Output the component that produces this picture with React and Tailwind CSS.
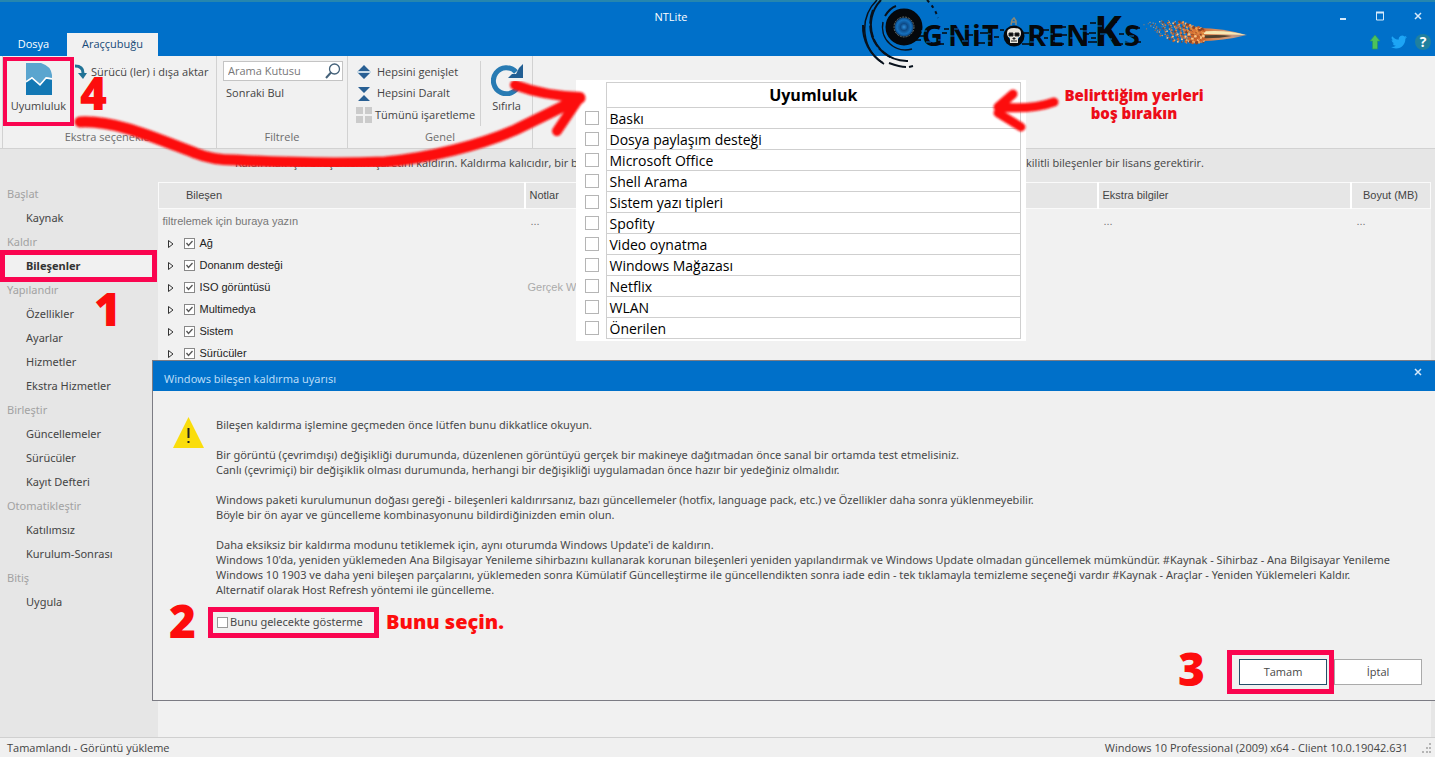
import React from "react";

const menu = [
  { title: "Başlat", items: ["Kaynak"] },
  { title: "Kaldır", items: ["Bileşenler"] },
  { title: "Yapılandır", items: ["Özellikler", "Ayarlar", "Hizmetler", "Ekstra Hizmetler"] },
  { title: "Birleştir", items: ["Güncellemeler", "Sürücüler", "Kayıt Defteri"] },
  { title: "Otomatikleştir", items: ["Katılımsız", "Kurulum-Sonrası"] },
  { title: "Bitiş", items: ["Uygula"] },
];

const components = [
  { name: "Ağ" },
  { name: "Donanım desteği" },
  { name: "ISO görüntüsü", note: "Gerçek W" },
  { name: "Multimedya" },
  { name: "Sistem" },
  { name: "Sürücüler" },
];

const compatibility = [
  "Baskı",
  "Dosya paylaşım desteği",
  "Microsoft Office",
  "Shell Arama",
  "Sistem yazı tipleri",
  "Spofity",
  "Video oynatma",
  "Windows Mağazası",
  "Netflix",
  "WLAN",
  "Önerilen",
];

const warning = [
  ["Bileşen kaldırma işlemine geçmeden önce lütfen bunu dikkatlice okuyun."],
  [
    "Bir görüntü (çevrimdışı) değişikliği durumunda, düzenlenen görüntüyü gerçek bir makineye dağıtmadan önce sanal bir ortamda test etmelisiniz.",
    "Canlı (çevrimiçi) bir değişiklik olması durumunda, herhangi bir değişikliği uygulamadan önce hazır bir yedeğiniz olmalıdır.",
  ],
  [
    "Windows paketi kurulumunun doğası gereği - bileşenleri kaldırırsanız, bazı güncellemeler (hotfix, language pack, etc.) ve Özellikler daha sonra yüklenmeyebilir.",
    "Böyle bir ön ayar ve güncelleme kombinasyonunu bildirdiğinizden emin olun.",
  ],
  [
    "Daha eksiksiz bir kaldırma modunu tetiklemek için, aynı oturumda Windows Update'i de kaldırın.",
    "Windows 10'da, yeniden yüklemeden Ana Bilgisayar Yenileme sihirbazını kullanarak korunan bileşenleri yeniden yapılandırmak ve Windows Update olmadan güncellemek mümkündür. #Kaynak - Sihirbaz - Ana Bilgisayar Yenileme",
    "Windows 10 1903 ve daha yeni bileşen parçalarını, yüklemeden sonra Kümülatif Güncelleştirme ile güncellendikten sonra iade edin - tek tıklamayla temizleme seçeneği vardır #Kaynak - Araçlar - Yeniden Yüklemeleri Kaldır.",
    "Alternatif olarak Host Refresh yöntemi ile güncelleme.",
  ],
];

const logoLetters = [
  { ch: "G", x: 72, y: 46, size: 29 },
  { ch: "N", x: 98, y: 46, size: 29 },
  { ch: "i", x: 122, y: 46, size: 29 },
  { ch: "T", x: 132, y: 46, size: 29 },
  { ch: "R", x: 177, y: 46, size: 29 },
  { ch: "E", x: 198, y: 46, size: 29 },
  { ch: "N", x: 216, y: 46, size: 29 },
  { ch: "K", x: 244, y: 46, size: 42 },
  { ch: "S", x: 274, y: 46, size: 29 },
];

const sparkColors = ["#e58a3c", "#c8602a", "#f7c58a", "#8a4326", "#f2a050", "#d9763a"];

// debris trail behind the bullet, denser towards the tip
const sparks = Array.from({ length: 260 }, (_, i) => {
  const a = (i * 0.618034) % 1;
  const b = (i * 0.414214 + 0.3) % 1;
  const t = Math.sqrt(a);
  return {
    x: 294 + t * 60,
    y: 26 + t * 10 + (b - 0.5) * (6 + 15 * Math.sin(t * 2.7)),
    r: 0.5 + t * ((i % 4) * 0.45),
    color: sparkColors[i % 6],
  };
});

const Logo = () => (
  <svg
    className="absolute left-[850px] top-0 w-[410px] h-20 pointer-events-none"
    viewBox="0 0 410 80"
    fill="none"
  >
    <defs>
      <linearGradient id="bullet" x1="0" x2="1">
        <stop offset="0" stopColor="#c8541e" />
        <stop offset="0.4" stopColor="#d98a58" />
        <stop offset="0.7" stopColor="#cf9a7c" />
        <stop offset="1" stopColor="#8d8f9a" />
      </linearGradient>
      <radialGradient id="lens">
        <stop offset="0" stopColor="#2d8fdc" />
        <stop offset="0.25" stopColor="#0e4a86" />
        <stop offset="0.5" stopColor="#1671bd" />
        <stop offset="0.65" stopColor="#0e4a86" />
        <stop offset="1" stopColor="#12395c" />
      </radialGradient>
    </defs>
    <g stroke="#08111c">
      <path d="M27 0A41 41 0 0 0 34 64" strokeWidth="1.5" />
      <path d="M31 0A36 36 0 0 0 58 61" strokeWidth="2" strokeDasharray="40 2 12 3" />
      <path d="M23 10A37 37 0 0 0 42 58" strokeWidth="2" strokeDasharray="14 2 22 3" />
      <path d="M13 25A43 43 0 0 0 33 63" strokeWidth="2" />
      <path d="M39 63Q50 67 56 67M59 67L63 66" strokeWidth="2" />
      <path d="M33 22A23 23 0 0 0 62 49" strokeWidth="1.5" />
      <path d="M35 16Q40 8 46 6" strokeWidth="2" />
      <path d="M77 0Q85 8 88 18" strokeWidth="2" strokeDasharray="3 4" />
    </g>
    <circle cx="54" cy="27" r="14" fill="url(#lens)" stroke="#05080c" strokeWidth="9" />
    <circle cx="54" cy="27" r="10" stroke="#66716f" strokeWidth="1" strokeDasharray="2 1" />
    {logoLetters.map((letter, index) => (
      <text
        key={index}
        x={letter.x}
        y={letter.y}
        fontSize={letter.size}
        className="font-['Open_Sans',sans-serif] font-bold"
        fill="#05080c"
      >
        {letter.ch}
      </text>
    ))}
    <path
      d="M71 31h6M76 42h5M88 40h6M100 36h5M104 29h4M112 41h6M114 29h5M132 41h9M137 34h4M180 42h5M184 34h5M197 34h6M203 41h6M220 38h6M232 31h5M225 44h5M246 26h6M250 34h6M255 39h7M262 30h5M275 42h7M283 31h6M279 36h5"
      stroke="#0270ca"
      strokeWidth="1"
    />
    <path
      d="M68 36h6M66 40h5M88 44h6M92 33h5M94 29h5M116 35h7M113 43h5M128 43h7M130 33h8M144 37h5M150 30h4M172 44h8M174 33h5M192 30h7M194 38h4M208 44h6M210 35h7M212 27h4M230 29h6M234 34h5M238 42h9M239 33h7M241 38h5M240 23h6M262 22h5M265 44h8M269 34h5M286 28h4M287 42h4"
      stroke="#05080c"
      strokeWidth="1.5"
    />
    <circle cx="164" cy="36" r="8" stroke="#05080c" strokeWidth="5" />
    <path d="M157 33Q157 28 164 28T171 33Q171 37 168 38V43H160V38Q157 37 157 33Z" fill="#e9e6dc" />
    <path d="M159 33h4v3h-4zM165 33h4v3h-4zM163 38h2v1h-2zM161 41h6" fill="#080808" stroke="#222" />
    <path d="M161 25L162 20L164 18L166 21V25M161 22h5" stroke="#8d8975" strokeWidth="1.5" />
    <path d="M342 28Q370 27 397 35Q370 42 342 41Z" fill="url(#bullet)" />
    <path d="M346 32Q375 29 396 35Q370 34 346 34Z" fill="#f6e8b4" />
    <path d="M346 36Q368 34 382 36Q366 39 346 38Z" fill="#4d4130" />
    {sparks.map((spark, index) => (
      <circle key={index} cx={spark.x} cy={spark.y} r={spark.r} fill={spark.color} />
    ))}
  </svg>
);

const Header = () => (
  <header className="flex h-14 border-t-2 border-[#2586ae] bg-[#0070c9] text-white">
    <nav className="flex items-end w-[158px] text-[11px]">
      <button className="w-[67px] h-[23px]">Dosya</button>
      <button className="flex-1 h-[23px] bg-[#f1f1f1] text-[#174a78]">Araççubuğu</button>
    </nav>
    <h1 className="flex-1 pt-[7px] text-center text-[11px] leading-4">NTLite</h1>
    <div className="flex flex-col items-end w-[251px] pr-3 pt-2 gap-3">
      <div className="flex items-center gap-7 h-3">
        <button aria-label="Simge durumuna küçült">
          <svg className="w-2 h-3" viewBox="0 0 8 12">
            <path d="M1 9h6" stroke="#d5e9fa" strokeWidth="2" />
          </svg>
        </button>
        <button aria-label="Ekranı kapla">
          <svg className="w-[10px] h-3" viewBox="0 0 10 12" fill="none" stroke="#d5e9fa">
            <path d="M1.5 2v8h7V2" />
            <path d="M1 2.5h8" strokeWidth="2" />
          </svg>
        </button>
        <button aria-label="Kapat">
          <svg className="w-[10px] h-3" viewBox="0 0 10 12">
            <path d="M2 3l6 6M8 3l-6 6" stroke="#d5e9fa" strokeWidth="1.5" />
          </svg>
        </button>
      </div>
      <div className="flex items-center gap-2 -mr-2">
        <button aria-label="Güncelle">
          <svg className="w-4 h-4" viewBox="0 0 16 16">
            <path d="M8 1l5 6h-2.5v8h-5V7H3z" fill="#4cc25a" stroke="#2c9560" strokeWidth="0.7" />
          </svg>
        </button>
        <button aria-label="Twitter">
          <svg className="w-4 h-4" viewBox="0 0 24 24">
            <path
              d="M23.9 4.6c-.9.4-1.8.7-2.8.8 1-.6 1.8-1.6 2.2-2.7-1 .6-2 1-3.1 1.2a4.9 4.9 0 0 0-8.4 4.5C7.7 8.2 4.1 6.2 1.7 3.2a4.9 4.9 0 0 0 1.5 6.5c-.8 0-1.6-.2-2.2-.6 0 2.3 1.6 4.4 3.9 4.9-.7.2-1.5.2-2.2.1.6 2 2.4 3.4 4.6 3.4A9.9 9.9 0 0 1 0 19.5a13.9 13.9 0 0 0 7.5 2.2c9.1 0 14-7.5 14-14v-.6c1-.7 1.8-1.6 2.4-2.5z"
              fill="#1da5f5"
            />
          </svg>
        </button>
        <button
          aria-label="Yardım"
          className="w-4 h-4 rounded-full bg-[#20809e] text-white text-sm leading-4 font-bold"
        >
          ?
        </button>
      </div>
    </div>
  </header>
);

const RibbonGroup = ({ label, className, children }) => (
  <section className={`flex flex-col border-r border-[#d2d2d2] ${className}`}>
    <div className="flex h-[70px]">{children}</div>
    <h2 className="text-center leading-[22px] text-[#6c6c6c]">{label}</h2>
  </section>
);

const Ribbon = () => (
  <div className="flex h-[93px] border-b border-[#d2d2d2] bg-[#f1f1f1] pl-[2px] text-[11px] text-[#444]">
    <RibbonGroup label="Ekstra seçenekler" className="w-[215px] border-l">
      <button className="flex flex-col items-center w-[71px] h-[69px] mt-px border-4 border-[#fa0550] pt-[2px]">
        <svg className="w-[26px] h-8" viewBox="0 0 26 32">
          <path d="M0 0h15Q25 3 26 12v3l-6-1-6 7-8-7-6 4z" fill="#5aa5cf" />
          <path d="M0 19l6-4 8 7 6-7 6 1v16H0z" fill="#1378b4" />
          <path d="M0 19l6-4 8 7 6-7 6 1" stroke="#fff" strokeWidth="1.5" fill="none" />
        </svg>
        <span className="mt-[3px] whitespace-nowrap">Uyumluluk</span>
      </button>
      <button className="flex items-center gap-1 h-8 pl-px whitespace-nowrap">
        <svg className="w-3 h-4" viewBox="0 0 12 16">
          <path d="M0 2Q8 2 8 9" stroke="#207396" strokeWidth="3" fill="none" />
          <path d="M3 9h9l-4 6z" fill="#207396" />
        </svg>
        Sürücü (ler) i dışa aktar
      </button>
    </RibbonGroup>
    <RibbonGroup label="Filtrele" className="w-[131px]">
      <div className="flex flex-col w-full px-1 pl-[6px] pt-[5px]">
        <div className="flex items-center h-5 border border-[#c4c4c4] bg-white">
          <input
            aria-label="Arama Kutusu"
            placeholder="Arama Kutusu"
            className="w-full min-w-0 px-1 pt-px outline-none placeholder:text-[#777]"
          />
          <svg className="w-4 h-4 mr-px shrink-0" viewBox="0 0 16 16" fill="none" stroke="#446179">
            <circle cx="9.5" cy="6" r="5" strokeWidth="1.3" />
            <path d="M6 9.5L1 15" strokeWidth="2" />
          </svg>
        </div>
        <button className="h-6 pl-[3px] text-left">Sonraki Bul</button>
      </div>
    </RibbonGroup>
    <RibbonGroup label="Genel" className="w-[185px]">
      <div className="flex flex-col w-[133px] mt-[5px] border-r border-[#d2d2d2] pl-2 whitespace-nowrap">
        <button className="flex items-center gap-[5px] h-[22px]">
          <svg className="w-4 h-4" viewBox="0 0 16 16" fill="#285f93">
            <path d="M2 7l6-6 6 6zM2 9h12l-6 6z" />
            <path d="M1 8h14" stroke="#9ec2dc" />
          </svg>
          Hepsini genişlet
        </button>
        <button className="flex items-center gap-[5px] h-[22px]">
          <svg className="w-4 h-4" viewBox="0 0 16 16" fill="#285f93">
            <path d="M2 1h12L8 7zM8 9l6 6H2z" />
          </svg>
          Hepsini Daralt
        </button>
        <button className="flex items-center gap-[3px] h-[22px]">
          <svg className="w-4 h-4 shrink-0" viewBox="0 0 16 16" fill="#cbcbcb">
            <path d="M0 0h7v7H0zM9 0h7v7H9zM0 9h7v7H0zM9 9h7v7H9z" />
          </svg>
          Tümünü işaretleme
        </button>
      </div>
      <button className="flex flex-1 flex-col items-center justify-start pt-2 gap-[2px]">
        <svg className="w-8 h-8" viewBox="0 0 32 32" fill="none">
          <path d="M25 8A13 13 0 1 0 28 20" stroke="#287bb3" strokeWidth="5" />
          <path d="M32 0v14H17l4-4 4 0 3-6z" fill="#235f93" />
        </svg>
        <span>Sıfırla</span>
      </button>
    </RibbonGroup>
  </div>
);

const Sidebar = () => (
  <nav className="w-[158px] shrink-0 bg-[#e6e6e6] font-['Noto_Sans',sans-serif] text-[11px] leading-6">
    {menu.map((group) => (
      <div key={group.title}>
        <h3 className="pl-[7px] text-[#a2a2a2]">{group.title}</h3>
        <ul>
          {group.items.map((item) => (
            <li key={item}>
              {item === "Bileşenler" ? (
                <a
                  href="#bilesenler"
                  className="relative block -my-1 h-8 w-[157px] border-[5px] border-[#fa0550] bg-[#f1f1f1] pl-[21px] leading-[22px] font-bold text-[#333]"
                >
                  {item}
                </a>
              ) : (
                <a href="#menu" className="block h-6 pl-[26px] text-[#444]">
                  {item}
                </a>
              )}
            </li>
          ))}
        </ul>
      </div>
    ))}
  </nav>
);

const ComponentTable = () => (
  <main className="flex-1 pr-1 bg-[#e6e6e6] flex">
    <div className="flex-1 bg-[#f1f1f1]">
      <table className="w-full table-fixed border-collapse font-['Liberation_Sans',sans-serif] text-[11px] text-[#222]">
        <colgroup>
          <col className="w-[366px]" />
          <col />
          <col className="w-[253px]" />
          <col className="w-20" />
        </colgroup>
        <thead>
          <tr className="h-[26px] border border-[#fafafa] bg-[#e6e6e6] text-left text-[#444]">
            <th className="pl-[27px] font-normal">Bileşen</th>
            <th className="border-l-2 border-white pl-1 font-normal">Notlar</th>
            <th className="border-l-2 border-white pl-1 font-normal">Ekstra bilgiler</th>
            <th className="border-l-2 border-white pr-3 text-right font-normal whitespace-nowrap">
              Boyut (MB)
            </th>
          </tr>
        </thead>
        <tbody>
          <tr className="h-6 text-[#777]">
            <td className="pl-1">filtrelemek için buraya yazın</td>
            <td className="pl-[6px]">...</td>
            <td className="pl-[6px]">...</td>
            <td className="pl-[6px]">...</td>
          </tr>
          {components.map((item, index) => (
            <tr key={item.name} className="h-[22px]">
              <td className="pl-2">
                <div className="flex items-center">
                  <svg className="w-2 h-[10px] mr-[9px]" viewBox="0 0 8 10">
                    <path d="M1.5 1.5L6 5L1.5 8.5z" fill="none" stroke="#333" />
                  </svg>
                  <span className="grid w-[11px] h-[11px] mr-[5px]">
                    <input
                      id={`component-${index}`}
                      type="checkbox"
                      defaultChecked
                      className="appearance-none col-start-1 row-start-1 w-[11px] h-[11px] border border-[#888] bg-white"
                    />
                    <svg
                      className="col-start-1 row-start-1 w-[11px] h-[11px] pointer-events-none"
                      viewBox="0 0 11 11"
                    >
                      <path d="M2.5 5l2 2.5 4-4.5" fill="none" stroke="#555" strokeWidth="1.3" />
                    </svg>
                  </span>
                  <label htmlFor={`component-${index}`}>{item.name}</label>
                </div>
              </td>
              <td className="pl-[3px] text-[#aaa]">{item.note}</td>
              <td />
              <td />
            </tr>
          ))}
        </tbody>
      </table>
    </div>
  </main>
);

const CompatibilityPanel = () => (
  <div className="absolute left-[576px] top-20 w-[450px] bg-white pt-[2px] pb-[2px] pr-[5px] font-['Open_Sans',sans-serif] text-sm text-black">
    <table className="w-full table-fixed border-collapse">
      <colgroup>
        <col className="w-[30px]" />
        <col />
      </colgroup>
      <thead>
        <tr className="h-[25px]">
          <td />
          <th className="border border-[#cfcfcf] text-base leading-5 font-bold">Uyumluluk</th>
        </tr>
      </thead>
      <tbody>
        {compatibility.map((name, index) => (
          <tr key={name} className="h-[21px]">
            <td className="pl-[9px]">
              <input
                id={`compat-${index}`}
                type="checkbox"
                className="block appearance-none w-[14px] h-[14px] border border-[#b5b5b5] bg-white"
              />
            </td>
            <td className="border border-[#cfcfcf] pl-[3px] pt-px leading-[19px]">
              <label htmlFor={`compat-${index}`}>{name}</label>
            </td>
          </tr>
        ))}
      </tbody>
    </table>
  </div>
);

const WarningDialog = () => (
  <div
    role="dialog"
    aria-labelledby="dialog-title"
    className="absolute left-[152px] right-0 top-[360px] h-[341px] flex flex-col border border-r-0 border-[#7c7c84] bg-[#f0f0f0] font-['Noto_Sans',sans-serif] text-[11px] text-[#484848]"
  >
    <div className="flex items-center justify-between h-[30px] bg-[#0070c9] pl-[11px] pr-3 text-[#b9dcf7]">
      <h2 id="dialog-title" className="pt-[6px]">
        Windows bileşen kaldırma uyarısı
      </h2>
      <button aria-label="Kapat" className="mb-2">
        <svg className="w-[10px] h-[10px]" viewBox="0 0 10 10">
          <path d="M2 2l6 6M8 2l-6 6" stroke="#d5e9fa" strokeWidth="1.5" />
        </svg>
      </button>
    </div>
    <div className="flex gap-3 pl-5 pt-[26px]">
      <svg className="w-[31px] h-[31px] shrink-0" viewBox="0 0 31 31">
        <path d="M15.5 0L31 31H0z" fill="#fadd0c" />
        <path d="M14.5 11h2v10h-2zM14.5 24h2v2h-2z" fill="#222" />
      </svg>
      <div className="flex flex-col gap-[15px] leading-[15px] whitespace-nowrap">
        {warning.map((lines, index) => (
          <div key={index}>
            {lines.map((line) => (
              <p key={line}>{line}</p>
            ))}
          </div>
        ))}
      </div>
    </div>
    <div className="flex items-center gap-[7px] pl-4 mt-[7px] font-['Open_Sans',sans-serif]">
      <span className="w-[25px] pb-1 text-[46px] leading-8 font-extrabold text-[#fd0d0d]">2</span>
      <label className="flex items-center gap-[2px] w-[171px] h-[31px] ml-[7px] border-[5px] border-[#fa0550] pl-1 font-['Noto_Sans',sans-serif] whitespace-nowrap">
        <input
          type="checkbox"
          className="appearance-none shrink-0 w-[11px] h-[11px] border border-[#999] bg-white"
        />
        Bunu gelecekte gösterme
      </label>
      <span className="text-[20px] leading-6 font-extrabold text-[#fd0d0d]">Bunu seçin.</span>
    </div>
    <div className="flex items-center justify-end mt-auto mb-[6px] pr-[13px] font-['Open_Sans',sans-serif]">
      <span className="w-[49px] pb-2 text-[46px] leading-8 font-extrabold text-[#fd0d0d]">3</span>
      <div className="w-[107px] h-11 border-[5px] border-[#fa0550] py-1 pl-[7px] pr-[2px]">
        <button className="w-full h-[26px] border border-[#234e68] bg-white">Tamam</button>
      </div>
      <button className="w-[88px] h-[26px] border border-[#aaa] bg-white">İptal</button>
    </div>
  </div>
);

const Annotations = () => (
  <>
    <span className="absolute left-20 top-[76px] text-[46px] leading-8 font-extrabold text-[#fd0d0d]">
      4
    </span>
    <span className="absolute left-[94px] top-[292px] text-[46px] leading-8 font-extrabold text-[#fd0d0d]">
      1
    </span>
    <p className="absolute left-[1054px] top-[86px] w-40 text-center text-[15px] leading-[18px] font-extrabold text-[#ed0c18]">
      Belirttiğim yerleri boş bırakın
    </p>
    <svg
      className="absolute left-0 top-0 w-[1070px] h-[180px] pointer-events-none"
      viewBox="0 0 1070 180"
      fill="none"
      stroke="#fd1111"
      strokeLinecap="round"
      strokeLinejoin="round"
    >
      <defs>
        <filter id="brush" x="-5%" y="-5%" width="110%" height="110%">
          <feGaussianBlur stdDeviation="1.2" />
        </filter>
      </defs>
      <g filter="url(#brush)">
        <path
          d="M80 122C115 120 155 138 195 153Q212 160 235 160C290 163 330 164 385 162C430 158 480 145 515 130Q548 114 580 98"
          strokeWidth="11"
        />
        <path d="M515 85Q545 96 580 97L557 131" strokeWidth="10" />
        <path d="M1054 102Q1032 110 999 107" strokeWidth="9" />
        <path d="M1013 94L998 107M998 113L1021 127" strokeWidth="9" />
      </g>
    </svg>
  </>
);

export default function App() {
  return (
    <div className="relative flex flex-col min-h-screen overflow-hidden bg-[#e6e6e6] font-['Open_Sans','Noto_Sans',sans-serif]">
      <Header />
      <Ribbon />
      <div className="flex items-center justify-between h-[33px] pl-[235px] pr-[231px] pb-1 text-[11px] text-[#444] whitespace-nowrap">
        <p>Kaldırmak için bileşenlerin işaretini kaldırın. Kaldırma kalıcıdır, bir b</p>
        <p>kilitli bileşenler bir lisans gerektirir.</p>
      </div>
      <div className="flex flex-1">
        <Sidebar />
        <ComponentTable />
      </div>
      <footer className="flex items-center justify-between h-[20px] border-t border-[#d0d0d0] bg-[#f0f0f0] pl-[7px] pr-[3px] pt-px text-[11px] text-[#444]">
        <span>Tamamlandı - Görüntü yükleme</span>
        <span className="flex items-center gap-[14px]">
          Windows 10 Professional (2009) x64 - Client 10.0.19042.631
          <svg className="w-[10px] h-[10px]" viewBox="0 0 10 10" fill="#b5b5b5">
            <path d="M7 0h2v2H7zM4 4h2v2H4zM7 4h2v2H7zM0 8h2v2H0zM4 8h2v2H4zM7 8h2v2H7z" />
          </svg>
        </span>
      </footer>
      <Logo />
      <CompatibilityPanel />
      <WarningDialog />
      <Annotations />
    </div>
  );
}
